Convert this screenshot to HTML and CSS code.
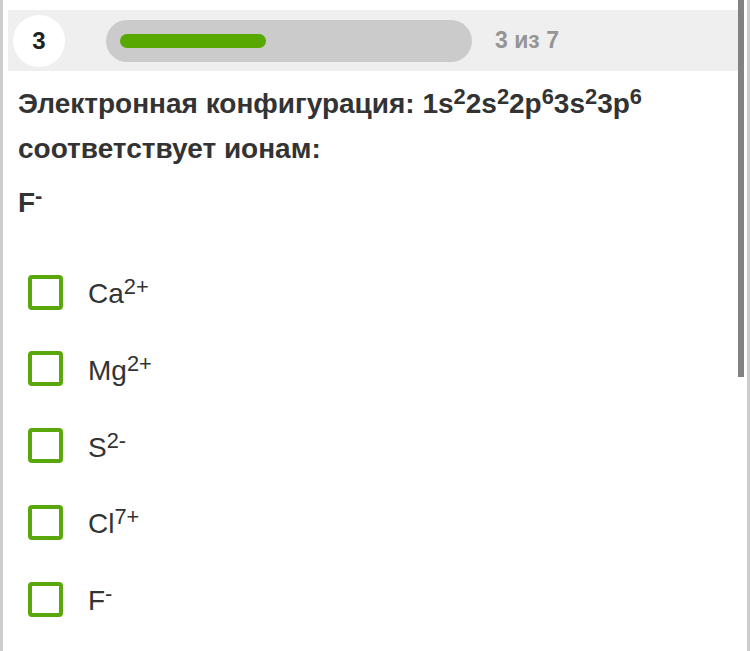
FILE: index.html
```html
<!DOCTYPE html>
<html lang="ru">
<head>
    <meta charset="UTF-8">
    <title>Тест</title>
    <link rel="stylesheet" href="styles.css">
</head>
<body>
    <div class="frame">
        <div class="main">
            <div class="header">
                <div class="num">3</div>
                <div class="track"><div class="fill" style="width: 146px"></div></div>
                <div class="count">3 из 7</div>
            </div>

            <div class="question">
                <p>Электронная конфигурация: 1s<sup>2</sup>2s<sup>2</sup>2p<sup>6</sup>3s<sup>2</sup>3p<sup>6</sup></p>
                <p>соответствует ионам:</p>
                <p class="ion">F<sup>-</sup></p>
            </div>

            <div class="options">
                <label class="option"><span class="box"></span><span class="label">Ca<sup>2+</sup></span></label>
                <label class="option"><span class="box"></span><span class="label">Mg<sup>2+</sup></span></label>
                <label class="option"><span class="box"></span><span class="label">S<sup>2-</sup></span></label>
                <label class="option"><span class="box"></span><span class="label">Cl<sup>7+</sup></span></label>
                <label class="option"><span class="box"></span><span class="label">F<sup>-</sup></span></label>
            </div>
        </div>
        <div class="gutter"><div class="thumb"></div></div>
    </div>
</body>
</html>
```

FILE: styles.css
```css
body {
    margin: 0;
    font-family: "Liberation Sans", Arial, sans-serif;
    color: #333;
    background: #fff;
    overflow: hidden;
}

.frame {
    display: flex;
    height: 651px;
    border-left: 3px solid #cdcdcd;
    border-right: 3px solid #cdcdcd;
    box-sizing: border-box;
}

.main {
    flex: 1;
    padding: 10px 0 0 5px;
}

.gutter {
    width: 9px;
}

.thumb {
    width: 6px;
    height: 377px;
    background: #828282;
}

.header {
    display: flex;
    align-items: center;
    height: 61px;
    background: #efefef;
    padding-left: 5px;
}

.num {
    width: 52px;
    height: 52px;
    border-radius: 50%;
    background: #fff;
    display: flex;
    align-items: center;
    justify-content: center;
    font-size: 24px;
    font-weight: bold;
    color: #222;
    margin-top: 1px;
}

.track {
    width: 366px;
    height: 42px;
    margin-left: 41px;
    border-radius: 21px;
    background: #cbcbcb;
    padding: 14px;
    box-sizing: border-box;
}

.fill {
    height: 14px;
    border-radius: 7px;
    background: #57a800;
}

.count {
    margin-left: 23px;
    font-size: 23px;
    font-weight: bold;
    color: #959595;
}

.question {
    padding: 10px 0 0 10px;
    font-size: 28px;
    font-weight: bold;
}

.question p {
    margin: 0;
    line-height: 45px;
}

.question .ion {
    margin-top: 9px;
}

sup {
    font-size: 0.78em;
    line-height: 0;
    vertical-align: 0.42em;
}

.options {
    padding: 49px 0 0 20px;
    display: flex;
    flex-direction: column;
    gap: 40.75px;
}

.option {
    display: flex;
    align-items: center;
    font-size: 28px;
}

.label {
    margin-top: 4px;
}

.box {
    width: 35px;
    height: 35px;
    border: 4px solid #5aa70c;
    border-radius: 4px;
    box-sizing: border-box;
    margin-right: 25px;
}
```
